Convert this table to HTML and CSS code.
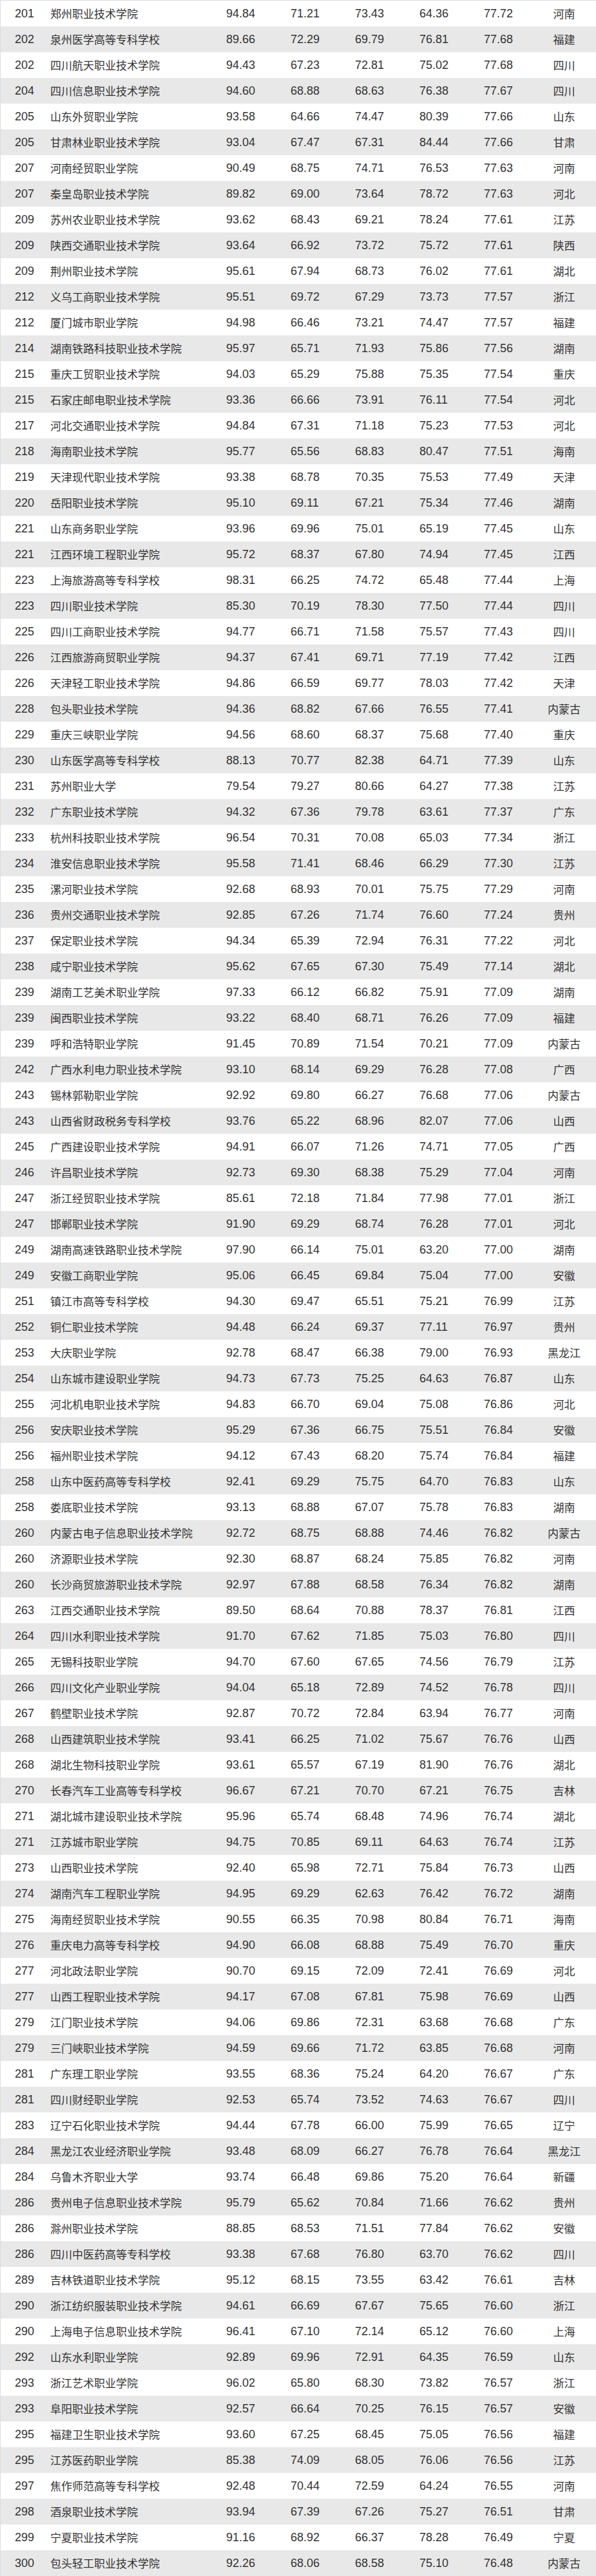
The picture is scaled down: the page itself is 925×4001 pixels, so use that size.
FILE: index.html
```html
<!DOCTYPE html>
<html lang="zh-CN">
<head>
<meta charset="utf-8">
<title>高职院校排名 201-300</title>
<link rel="stylesheet" href="styles.css">
</head>
<body>
<div class="table">
<div class="row"><span class="rank">201</span><span class="name">郑州职业技术学院</span><span class="num">94.84</span><span class="num">71.21</span><span class="num">73.43</span><span class="num">64.36</span><span class="num">77.72</span><span class="prov">河南</span></div>
<div class="row"><span class="rank">202</span><span class="name">泉州医学高等专科学校</span><span class="num">89.66</span><span class="num">72.29</span><span class="num">69.79</span><span class="num">76.81</span><span class="num">77.68</span><span class="prov">福建</span></div>
<div class="row"><span class="rank">202</span><span class="name">四川航天职业技术学院</span><span class="num">94.43</span><span class="num">67.23</span><span class="num">72.81</span><span class="num">75.02</span><span class="num">77.68</span><span class="prov">四川</span></div>
<div class="row"><span class="rank">204</span><span class="name">四川信息职业技术学院</span><span class="num">94.60</span><span class="num">68.88</span><span class="num">68.63</span><span class="num">76.38</span><span class="num">77.67</span><span class="prov">四川</span></div>
<div class="row"><span class="rank">205</span><span class="name">山东外贸职业学院</span><span class="num">93.58</span><span class="num">64.66</span><span class="num">74.47</span><span class="num">80.39</span><span class="num">77.66</span><span class="prov">山东</span></div>
<div class="row"><span class="rank">205</span><span class="name">甘肃林业职业技术学院</span><span class="num">93.04</span><span class="num">67.47</span><span class="num">67.31</span><span class="num">84.44</span><span class="num">77.66</span><span class="prov">甘肃</span></div>
<div class="row"><span class="rank">207</span><span class="name">河南经贸职业学院</span><span class="num">90.49</span><span class="num">68.75</span><span class="num">74.71</span><span class="num">76.53</span><span class="num">77.63</span><span class="prov">河南</span></div>
<div class="row"><span class="rank">207</span><span class="name">秦皇岛职业技术学院</span><span class="num">89.82</span><span class="num">69.00</span><span class="num">73.64</span><span class="num">78.72</span><span class="num">77.63</span><span class="prov">河北</span></div>
<div class="row"><span class="rank">209</span><span class="name">苏州农业职业技术学院</span><span class="num">93.62</span><span class="num">68.43</span><span class="num">69.21</span><span class="num">78.24</span><span class="num">77.61</span><span class="prov">江苏</span></div>
<div class="row"><span class="rank">209</span><span class="name">陕西交通职业技术学院</span><span class="num">93.64</span><span class="num">66.92</span><span class="num">73.72</span><span class="num">75.72</span><span class="num">77.61</span><span class="prov">陕西</span></div>
<div class="row"><span class="rank">209</span><span class="name">荆州职业技术学院</span><span class="num">95.61</span><span class="num">67.94</span><span class="num">68.73</span><span class="num">76.02</span><span class="num">77.61</span><span class="prov">湖北</span></div>
<div class="row"><span class="rank">212</span><span class="name">义乌工商职业技术学院</span><span class="num">95.51</span><span class="num">69.72</span><span class="num">67.29</span><span class="num">73.73</span><span class="num">77.57</span><span class="prov">浙江</span></div>
<div class="row"><span class="rank">212</span><span class="name">厦门城市职业学院</span><span class="num">94.98</span><span class="num">66.46</span><span class="num">73.21</span><span class="num">74.47</span><span class="num">77.57</span><span class="prov">福建</span></div>
<div class="row"><span class="rank">214</span><span class="name">湖南铁路科技职业技术学院</span><span class="num">95.97</span><span class="num">65.71</span><span class="num">71.93</span><span class="num">75.86</span><span class="num">77.56</span><span class="prov">湖南</span></div>
<div class="row"><span class="rank">215</span><span class="name">重庆工贸职业技术学院</span><span class="num">94.03</span><span class="num">65.29</span><span class="num">75.88</span><span class="num">75.35</span><span class="num">77.54</span><span class="prov">重庆</span></div>
<div class="row"><span class="rank">215</span><span class="name">石家庄邮电职业技术学院</span><span class="num">93.36</span><span class="num">66.66</span><span class="num">73.91</span><span class="num">76.11</span><span class="num">77.54</span><span class="prov">河北</span></div>
<div class="row"><span class="rank">217</span><span class="name">河北交通职业技术学院</span><span class="num">94.84</span><span class="num">67.31</span><span class="num">71.18</span><span class="num">75.23</span><span class="num">77.53</span><span class="prov">河北</span></div>
<div class="row"><span class="rank">218</span><span class="name">海南职业技术学院</span><span class="num">95.77</span><span class="num">65.56</span><span class="num">68.83</span><span class="num">80.47</span><span class="num">77.51</span><span class="prov">海南</span></div>
<div class="row"><span class="rank">219</span><span class="name">天津现代职业技术学院</span><span class="num">93.38</span><span class="num">68.78</span><span class="num">70.35</span><span class="num">75.53</span><span class="num">77.49</span><span class="prov">天津</span></div>
<div class="row"><span class="rank">220</span><span class="name">岳阳职业技术学院</span><span class="num">95.10</span><span class="num">69.11</span><span class="num">67.21</span><span class="num">75.34</span><span class="num">77.46</span><span class="prov">湖南</span></div>
<div class="row"><span class="rank">221</span><span class="name">山东商务职业学院</span><span class="num">93.96</span><span class="num">69.96</span><span class="num">75.01</span><span class="num">65.19</span><span class="num">77.45</span><span class="prov">山东</span></div>
<div class="row"><span class="rank">221</span><span class="name">江西环境工程职业学院</span><span class="num">95.72</span><span class="num">68.37</span><span class="num">67.80</span><span class="num">74.94</span><span class="num">77.45</span><span class="prov">江西</span></div>
<div class="row"><span class="rank">223</span><span class="name">上海旅游高等专科学校</span><span class="num">98.31</span><span class="num">66.25</span><span class="num">74.72</span><span class="num">65.48</span><span class="num">77.44</span><span class="prov">上海</span></div>
<div class="row"><span class="rank">223</span><span class="name">四川职业技术学院</span><span class="num">85.30</span><span class="num">70.19</span><span class="num">78.30</span><span class="num">77.50</span><span class="num">77.44</span><span class="prov">四川</span></div>
<div class="row"><span class="rank">225</span><span class="name">四川工商职业技术学院</span><span class="num">94.77</span><span class="num">66.71</span><span class="num">71.58</span><span class="num">75.57</span><span class="num">77.43</span><span class="prov">四川</span></div>
<div class="row"><span class="rank">226</span><span class="name">江西旅游商贸职业学院</span><span class="num">94.37</span><span class="num">67.41</span><span class="num">69.71</span><span class="num">77.19</span><span class="num">77.42</span><span class="prov">江西</span></div>
<div class="row"><span class="rank">226</span><span class="name">天津轻工职业技术学院</span><span class="num">94.86</span><span class="num">66.59</span><span class="num">69.77</span><span class="num">78.03</span><span class="num">77.42</span><span class="prov">天津</span></div>
<div class="row"><span class="rank">228</span><span class="name">包头职业技术学院</span><span class="num">94.36</span><span class="num">68.82</span><span class="num">67.66</span><span class="num">76.55</span><span class="num">77.41</span><span class="prov">内蒙古</span></div>
<div class="row"><span class="rank">229</span><span class="name">重庆三峡职业学院</span><span class="num">94.56</span><span class="num">68.60</span><span class="num">68.37</span><span class="num">75.68</span><span class="num">77.40</span><span class="prov">重庆</span></div>
<div class="row"><span class="rank">230</span><span class="name">山东医学高等专科学校</span><span class="num">88.13</span><span class="num">70.77</span><span class="num">82.38</span><span class="num">64.71</span><span class="num">77.39</span><span class="prov">山东</span></div>
<div class="row"><span class="rank">231</span><span class="name">苏州职业大学</span><span class="num">79.54</span><span class="num">79.27</span><span class="num">80.66</span><span class="num">64.27</span><span class="num">77.38</span><span class="prov">江苏</span></div>
<div class="row"><span class="rank">232</span><span class="name">广东职业技术学院</span><span class="num">94.32</span><span class="num">67.36</span><span class="num">79.78</span><span class="num">63.61</span><span class="num">77.37</span><span class="prov">广东</span></div>
<div class="row"><span class="rank">233</span><span class="name">杭州科技职业技术学院</span><span class="num">96.54</span><span class="num">70.31</span><span class="num">70.08</span><span class="num">65.03</span><span class="num">77.34</span><span class="prov">浙江</span></div>
<div class="row"><span class="rank">234</span><span class="name">淮安信息职业技术学院</span><span class="num">95.58</span><span class="num">71.41</span><span class="num">68.46</span><span class="num">66.29</span><span class="num">77.30</span><span class="prov">江苏</span></div>
<div class="row"><span class="rank">235</span><span class="name">漯河职业技术学院</span><span class="num">92.68</span><span class="num">68.93</span><span class="num">70.01</span><span class="num">75.75</span><span class="num">77.29</span><span class="prov">河南</span></div>
<div class="row"><span class="rank">236</span><span class="name">贵州交通职业技术学院</span><span class="num">92.85</span><span class="num">67.26</span><span class="num">71.74</span><span class="num">76.60</span><span class="num">77.24</span><span class="prov">贵州</span></div>
<div class="row"><span class="rank">237</span><span class="name">保定职业技术学院</span><span class="num">94.34</span><span class="num">65.39</span><span class="num">72.94</span><span class="num">76.31</span><span class="num">77.22</span><span class="prov">河北</span></div>
<div class="row"><span class="rank">238</span><span class="name">咸宁职业技术学院</span><span class="num">95.62</span><span class="num">67.65</span><span class="num">67.30</span><span class="num">75.49</span><span class="num">77.14</span><span class="prov">湖北</span></div>
<div class="row"><span class="rank">239</span><span class="name">湖南工艺美术职业学院</span><span class="num">97.33</span><span class="num">66.12</span><span class="num">66.82</span><span class="num">75.91</span><span class="num">77.09</span><span class="prov">湖南</span></div>
<div class="row"><span class="rank">239</span><span class="name">闽西职业技术学院</span><span class="num">93.22</span><span class="num">68.40</span><span class="num">68.71</span><span class="num">76.26</span><span class="num">77.09</span><span class="prov">福建</span></div>
<div class="row"><span class="rank">239</span><span class="name">呼和浩特职业学院</span><span class="num">91.45</span><span class="num">70.89</span><span class="num">71.54</span><span class="num">70.21</span><span class="num">77.09</span><span class="prov">内蒙古</span></div>
<div class="row"><span class="rank">242</span><span class="name">广西水利电力职业技术学院</span><span class="num">93.10</span><span class="num">68.14</span><span class="num">69.29</span><span class="num">76.28</span><span class="num">77.08</span><span class="prov">广西</span></div>
<div class="row"><span class="rank">243</span><span class="name">锡林郭勒职业学院</span><span class="num">92.92</span><span class="num">69.80</span><span class="num">66.27</span><span class="num">76.68</span><span class="num">77.06</span><span class="prov">内蒙古</span></div>
<div class="row"><span class="rank">243</span><span class="name">山西省财政税务专科学校</span><span class="num">93.76</span><span class="num">65.22</span><span class="num">68.96</span><span class="num">82.07</span><span class="num">77.06</span><span class="prov">山西</span></div>
<div class="row"><span class="rank">245</span><span class="name">广西建设职业技术学院</span><span class="num">94.91</span><span class="num">66.07</span><span class="num">71.26</span><span class="num">74.71</span><span class="num">77.05</span><span class="prov">广西</span></div>
<div class="row"><span class="rank">246</span><span class="name">许昌职业技术学院</span><span class="num">92.73</span><span class="num">69.30</span><span class="num">68.38</span><span class="num">75.29</span><span class="num">77.04</span><span class="prov">河南</span></div>
<div class="row"><span class="rank">247</span><span class="name">浙江经贸职业技术学院</span><span class="num">85.61</span><span class="num">72.18</span><span class="num">71.84</span><span class="num">77.98</span><span class="num">77.01</span><span class="prov">浙江</span></div>
<div class="row"><span class="rank">247</span><span class="name">邯郸职业技术学院</span><span class="num">91.90</span><span class="num">69.29</span><span class="num">68.74</span><span class="num">76.28</span><span class="num">77.01</span><span class="prov">河北</span></div>
<div class="row"><span class="rank">249</span><span class="name">湖南高速铁路职业技术学院</span><span class="num">97.90</span><span class="num">66.14</span><span class="num">75.01</span><span class="num">63.20</span><span class="num">77.00</span><span class="prov">湖南</span></div>
<div class="row"><span class="rank">249</span><span class="name">安徽工商职业学院</span><span class="num">95.06</span><span class="num">66.45</span><span class="num">69.84</span><span class="num">75.04</span><span class="num">77.00</span><span class="prov">安徽</span></div>
<div class="row"><span class="rank">251</span><span class="name">镇江市高等专科学校</span><span class="num">94.30</span><span class="num">69.47</span><span class="num">65.51</span><span class="num">75.21</span><span class="num">76.99</span><span class="prov">江苏</span></div>
<div class="row"><span class="rank">252</span><span class="name">铜仁职业技术学院</span><span class="num">94.48</span><span class="num">66.24</span><span class="num">69.37</span><span class="num">77.11</span><span class="num">76.97</span><span class="prov">贵州</span></div>
<div class="row"><span class="rank">253</span><span class="name">大庆职业学院</span><span class="num">92.78</span><span class="num">68.47</span><span class="num">66.38</span><span class="num">79.00</span><span class="num">76.93</span><span class="prov">黑龙江</span></div>
<div class="row"><span class="rank">254</span><span class="name">山东城市建设职业学院</span><span class="num">94.73</span><span class="num">67.73</span><span class="num">75.25</span><span class="num">64.63</span><span class="num">76.87</span><span class="prov">山东</span></div>
<div class="row"><span class="rank">255</span><span class="name">河北机电职业技术学院</span><span class="num">94.83</span><span class="num">66.70</span><span class="num">69.04</span><span class="num">75.08</span><span class="num">76.86</span><span class="prov">河北</span></div>
<div class="row"><span class="rank">256</span><span class="name">安庆职业技术学院</span><span class="num">95.29</span><span class="num">67.36</span><span class="num">66.75</span><span class="num">75.51</span><span class="num">76.84</span><span class="prov">安徽</span></div>
<div class="row"><span class="rank">256</span><span class="name">福州职业技术学院</span><span class="num">94.12</span><span class="num">67.43</span><span class="num">68.20</span><span class="num">75.74</span><span class="num">76.84</span><span class="prov">福建</span></div>
<div class="row"><span class="rank">258</span><span class="name">山东中医药高等专科学校</span><span class="num">92.41</span><span class="num">69.29</span><span class="num">75.75</span><span class="num">64.70</span><span class="num">76.83</span><span class="prov">山东</span></div>
<div class="row"><span class="rank">258</span><span class="name">娄底职业技术学院</span><span class="num">93.13</span><span class="num">68.88</span><span class="num">67.07</span><span class="num">75.78</span><span class="num">76.83</span><span class="prov">湖南</span></div>
<div class="row"><span class="rank">260</span><span class="name">内蒙古电子信息职业技术学院</span><span class="num">92.72</span><span class="num">68.75</span><span class="num">68.88</span><span class="num">74.46</span><span class="num">76.82</span><span class="prov">内蒙古</span></div>
<div class="row"><span class="rank">260</span><span class="name">济源职业技术学院</span><span class="num">92.30</span><span class="num">68.87</span><span class="num">68.24</span><span class="num">75.85</span><span class="num">76.82</span><span class="prov">河南</span></div>
<div class="row"><span class="rank">260</span><span class="name">长沙商贸旅游职业技术学院</span><span class="num">92.97</span><span class="num">67.88</span><span class="num">68.58</span><span class="num">76.34</span><span class="num">76.82</span><span class="prov">湖南</span></div>
<div class="row"><span class="rank">263</span><span class="name">江西交通职业技术学院</span><span class="num">89.50</span><span class="num">68.64</span><span class="num">70.88</span><span class="num">78.37</span><span class="num">76.81</span><span class="prov">江西</span></div>
<div class="row"><span class="rank">264</span><span class="name">四川水利职业技术学院</span><span class="num">91.70</span><span class="num">67.62</span><span class="num">71.85</span><span class="num">75.03</span><span class="num">76.80</span><span class="prov">四川</span></div>
<div class="row"><span class="rank">265</span><span class="name">无锡科技职业学院</span><span class="num">94.70</span><span class="num">67.60</span><span class="num">67.65</span><span class="num">74.56</span><span class="num">76.79</span><span class="prov">江苏</span></div>
<div class="row"><span class="rank">266</span><span class="name">四川文化产业职业学院</span><span class="num">94.04</span><span class="num">65.18</span><span class="num">72.89</span><span class="num">74.52</span><span class="num">76.78</span><span class="prov">四川</span></div>
<div class="row"><span class="rank">267</span><span class="name">鹤壁职业技术学院</span><span class="num">92.87</span><span class="num">70.72</span><span class="num">72.84</span><span class="num">63.94</span><span class="num">76.77</span><span class="prov">河南</span></div>
<div class="row"><span class="rank">268</span><span class="name">山西建筑职业技术学院</span><span class="num">93.41</span><span class="num">66.25</span><span class="num">71.02</span><span class="num">75.67</span><span class="num">76.76</span><span class="prov">山西</span></div>
<div class="row"><span class="rank">268</span><span class="name">湖北生物科技职业学院</span><span class="num">93.61</span><span class="num">65.57</span><span class="num">67.19</span><span class="num">81.90</span><span class="num">76.76</span><span class="prov">湖北</span></div>
<div class="row"><span class="rank">270</span><span class="name">长春汽车工业高等专科学校</span><span class="num">96.67</span><span class="num">67.21</span><span class="num">70.70</span><span class="num">67.21</span><span class="num">76.75</span><span class="prov">吉林</span></div>
<div class="row"><span class="rank">271</span><span class="name">湖北城市建设职业技术学院</span><span class="num">95.96</span><span class="num">65.74</span><span class="num">68.48</span><span class="num">74.96</span><span class="num">76.74</span><span class="prov">湖北</span></div>
<div class="row"><span class="rank">271</span><span class="name">江苏城市职业学院</span><span class="num">94.75</span><span class="num">70.85</span><span class="num">69.11</span><span class="num">64.63</span><span class="num">76.74</span><span class="prov">江苏</span></div>
<div class="row"><span class="rank">273</span><span class="name">山西职业技术学院</span><span class="num">92.40</span><span class="num">65.98</span><span class="num">72.71</span><span class="num">75.84</span><span class="num">76.73</span><span class="prov">山西</span></div>
<div class="row"><span class="rank">274</span><span class="name">湖南汽车工程职业学院</span><span class="num">94.95</span><span class="num">69.29</span><span class="num">62.63</span><span class="num">76.42</span><span class="num">76.72</span><span class="prov">湖南</span></div>
<div class="row"><span class="rank">275</span><span class="name">海南经贸职业技术学院</span><span class="num">90.55</span><span class="num">66.35</span><span class="num">70.98</span><span class="num">80.84</span><span class="num">76.71</span><span class="prov">海南</span></div>
<div class="row"><span class="rank">276</span><span class="name">重庆电力高等专科学校</span><span class="num">94.90</span><span class="num">66.08</span><span class="num">68.88</span><span class="num">75.49</span><span class="num">76.70</span><span class="prov">重庆</span></div>
<div class="row"><span class="rank">277</span><span class="name">河北政法职业学院</span><span class="num">90.70</span><span class="num">69.15</span><span class="num">72.09</span><span class="num">72.41</span><span class="num">76.69</span><span class="prov">河北</span></div>
<div class="row"><span class="rank">277</span><span class="name">山西工程职业技术学院</span><span class="num">94.17</span><span class="num">67.08</span><span class="num">67.81</span><span class="num">75.98</span><span class="num">76.69</span><span class="prov">山西</span></div>
<div class="row"><span class="rank">279</span><span class="name">江门职业技术学院</span><span class="num">94.06</span><span class="num">69.86</span><span class="num">72.31</span><span class="num">63.68</span><span class="num">76.68</span><span class="prov">广东</span></div>
<div class="row"><span class="rank">279</span><span class="name">三门峡职业技术学院</span><span class="num">94.59</span><span class="num">69.66</span><span class="num">71.72</span><span class="num">63.85</span><span class="num">76.68</span><span class="prov">河南</span></div>
<div class="row"><span class="rank">281</span><span class="name">广东理工职业学院</span><span class="num">93.55</span><span class="num">68.36</span><span class="num">75.24</span><span class="num">64.20</span><span class="num">76.67</span><span class="prov">广东</span></div>
<div class="row"><span class="rank">281</span><span class="name">四川财经职业学院</span><span class="num">92.53</span><span class="num">65.74</span><span class="num">73.52</span><span class="num">74.63</span><span class="num">76.67</span><span class="prov">四川</span></div>
<div class="row"><span class="rank">283</span><span class="name">辽宁石化职业技术学院</span><span class="num">94.44</span><span class="num">67.78</span><span class="num">66.00</span><span class="num">75.99</span><span class="num">76.65</span><span class="prov">辽宁</span></div>
<div class="row"><span class="rank">284</span><span class="name">黑龙江农业经济职业学院</span><span class="num">93.48</span><span class="num">68.09</span><span class="num">66.27</span><span class="num">76.78</span><span class="num">76.64</span><span class="prov">黑龙江</span></div>
<div class="row"><span class="rank">284</span><span class="name">乌鲁木齐职业大学</span><span class="num">93.74</span><span class="num">66.48</span><span class="num">69.86</span><span class="num">75.20</span><span class="num">76.64</span><span class="prov">新疆</span></div>
<div class="row"><span class="rank">286</span><span class="name">贵州电子信息职业技术学院</span><span class="num">95.79</span><span class="num">65.62</span><span class="num">70.84</span><span class="num">71.66</span><span class="num">76.62</span><span class="prov">贵州</span></div>
<div class="row"><span class="rank">286</span><span class="name">滁州职业技术学院</span><span class="num">88.85</span><span class="num">68.53</span><span class="num">71.51</span><span class="num">77.84</span><span class="num">76.62</span><span class="prov">安徽</span></div>
<div class="row"><span class="rank">286</span><span class="name">四川中医药高等专科学校</span><span class="num">93.38</span><span class="num">67.68</span><span class="num">76.80</span><span class="num">63.70</span><span class="num">76.62</span><span class="prov">四川</span></div>
<div class="row"><span class="rank">289</span><span class="name">吉林铁道职业技术学院</span><span class="num">95.12</span><span class="num">68.15</span><span class="num">73.55</span><span class="num">63.42</span><span class="num">76.61</span><span class="prov">吉林</span></div>
<div class="row"><span class="rank">290</span><span class="name">浙江纺织服装职业技术学院</span><span class="num">94.61</span><span class="num">66.69</span><span class="num">67.67</span><span class="num">75.65</span><span class="num">76.60</span><span class="prov">浙江</span></div>
<div class="row"><span class="rank">290</span><span class="name">上海电子信息职业技术学院</span><span class="num">96.41</span><span class="num">67.10</span><span class="num">72.14</span><span class="num">65.12</span><span class="num">76.60</span><span class="prov">上海</span></div>
<div class="row"><span class="rank">292</span><span class="name">山东水利职业学院</span><span class="num">92.89</span><span class="num">69.96</span><span class="num">72.91</span><span class="num">64.35</span><span class="num">76.59</span><span class="prov">山东</span></div>
<div class="row"><span class="rank">293</span><span class="name">浙江艺术职业学院</span><span class="num">96.02</span><span class="num">65.80</span><span class="num">68.30</span><span class="num">73.82</span><span class="num">76.57</span><span class="prov">浙江</span></div>
<div class="row"><span class="rank">293</span><span class="name">阜阳职业技术学院</span><span class="num">92.57</span><span class="num">66.64</span><span class="num">70.25</span><span class="num">76.15</span><span class="num">76.57</span><span class="prov">安徽</span></div>
<div class="row"><span class="rank">295</span><span class="name">福建卫生职业技术学院</span><span class="num">93.60</span><span class="num">67.25</span><span class="num">68.45</span><span class="num">75.05</span><span class="num">76.56</span><span class="prov">福建</span></div>
<div class="row"><span class="rank">295</span><span class="name">江苏医药职业学院</span><span class="num">85.38</span><span class="num">74.09</span><span class="num">68.05</span><span class="num">76.06</span><span class="num">76.56</span><span class="prov">江苏</span></div>
<div class="row"><span class="rank">297</span><span class="name">焦作师范高等专科学校</span><span class="num">92.48</span><span class="num">70.44</span><span class="num">72.59</span><span class="num">64.24</span><span class="num">76.55</span><span class="prov">河南</span></div>
<div class="row"><span class="rank">298</span><span class="name">酒泉职业技术学院</span><span class="num">93.94</span><span class="num">67.39</span><span class="num">67.26</span><span class="num">75.27</span><span class="num">76.51</span><span class="prov">甘肃</span></div>
<div class="row"><span class="rank">299</span><span class="name">宁夏职业技术学院</span><span class="num">91.16</span><span class="num">68.92</span><span class="num">66.37</span><span class="num">78.28</span><span class="num">76.49</span><span class="prov">宁夏</span></div>
<div class="row"><span class="rank">300</span><span class="name">包头轻工职业技术学院</span><span class="num">92.26</span><span class="num">68.06</span><span class="num">68.58</span><span class="num">75.10</span><span class="num">76.48</span><span class="prov">内蒙古</span></div>
</div>
</body>
</html>
```

FILE: styles.css
```css
html, body {
  margin: 0;
  padding: 0;
  background: #ffffff;
}

.table {
  width: 925px;
  box-sizing: border-box;
  border-top: 1px solid #dcdcdc;
  border-left: 1px solid #dcdcdc;
  font-family: "Liberation Sans", "Noto Sans CJK SC", sans-serif;
  color: #333333;
}

.row {
  display: grid;
  grid-template-columns: 77px 273px 100px 100px 100px 100px 75px 99px;
  height: 40px;
  align-items: center;
  font-size: 18px;
  line-height: 40px;
  white-space: nowrap;
}

.row:nth-child(even) {
  background: #e8e8e8;
}

.rank {
  padding-left: 22px;
}

.name {
  font-family: "Noto Sans CJK SC", sans-serif;
  font-size: 17px;
}

.prov {
  text-align: center;
  font-family: "Noto Sans CJK SC", sans-serif;
  font-size: 17px;
}
```
